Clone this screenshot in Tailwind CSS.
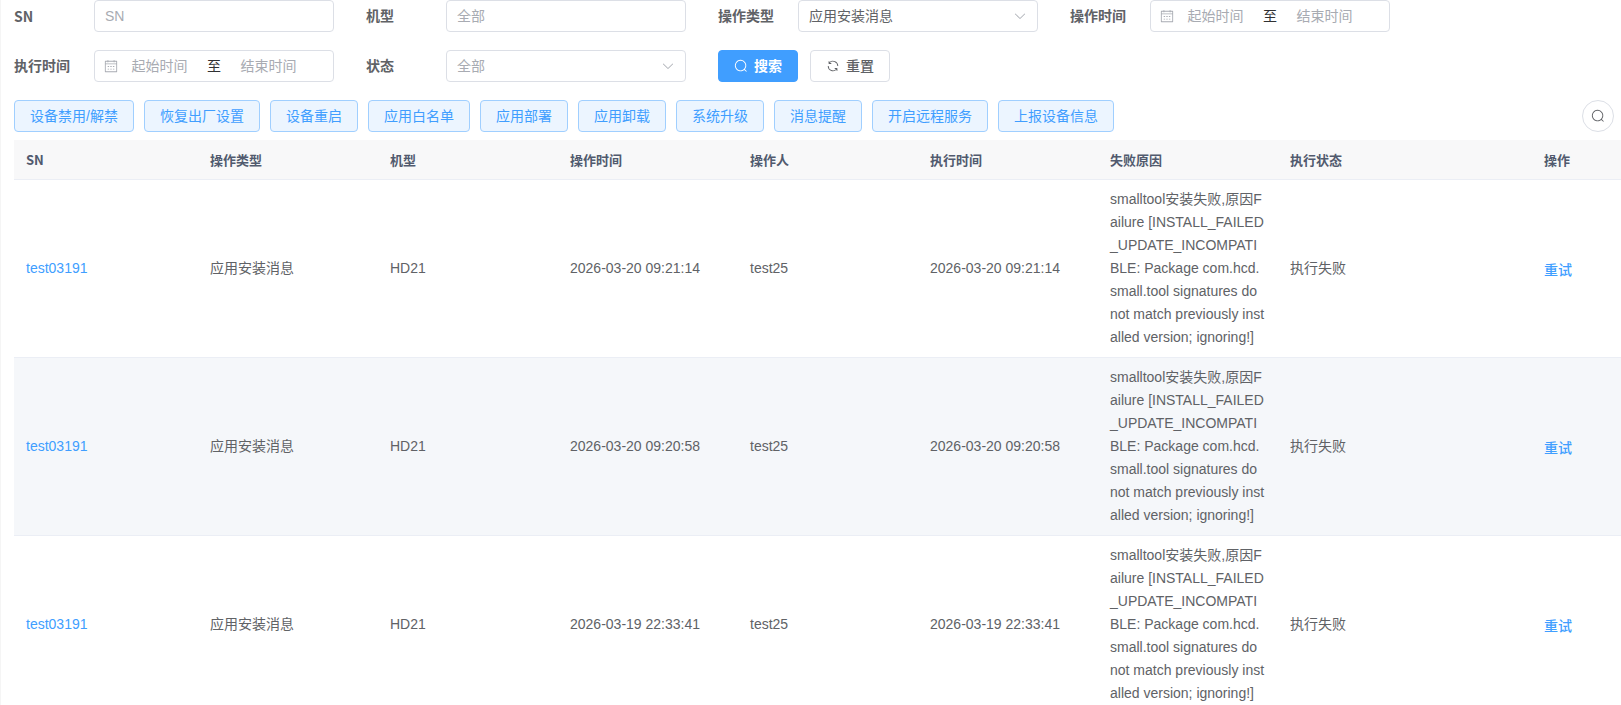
<!DOCTYPE html>
<html lang="zh-CN">
<head>
<meta charset="utf-8">
<meta name="viewport" content="width=device-width, initial-scale=1">
<title>操作记录</title>
<script src="https://cdn.jsdelivr.net/npm/@tailwindcss/browser@4"></script>
</head>
<body class="h-screen overflow-hidden border-l border-[#f5f5f5] bg-white pl-[13px] font-['Liberation_Sans','Noto_Sans_CJK_SC',sans-serif] text-sm text-[#606266]">
<svg class="hidden" aria-hidden="true">
  <symbol id="search" viewBox="0 0 1024 1024"><path fill="currentColor" d="m795.904 750.72 124.992 124.928a32 32 0 0 1-45.248 45.248L750.656 795.904a416 416 0 1 1 45.248-45.184zM480 832a352 352 0 1 0 0-704 352 352 0 0 0 0 704z"/></symbol>
  <symbol id="down" viewBox="0 0 1024 1024"><path fill="currentColor" d="M831.872 340.864 512 652.672 192.128 340.864a30.592 30.592 0 0 0-42.752 0 29.12 29.12 0 0 0 0 41.6L489.664 714.24a32 32 0 0 0 44.672 0l340.288-331.712a29.12 29.12 0 0 0 0-41.728 30.592 30.592 0 0 0-42.752 0z"/></symbol>
  <symbol id="refresh" viewBox="0 0 1024 1024"><path fill="currentColor" d="M771.776 794.88A384 384 0 0 1 128 512h64a320 320 0 0 0 555.712 216.448H654.72a32 32 0 1 1 0-64h149.056a32 32 0 0 1 32 32v148.928a32 32 0 1 1-64 0v-50.56zM276.288 295.616h92.992a32 32 0 0 1 0 64H220.16a32 32 0 0 1-32-32V178.56a32 32 0 0 1 64 0v50.56A384 384 0 0 1 896.128 512h-64a320 320 0 0 0-555.776-216.384z"/></symbol>
  <symbol id="calendar" viewBox="0 0 1024 1024"><path fill="currentColor" d="M128 384v512h768V192H768v32a32 32 0 1 1-64 0v-32H320v32a32 32 0 0 1-64 0v-32H128v128h768v64zm192-256h384V96a32 32 0 1 1 64 0v32h160a32 32 0 0 1 32 32v768a32 32 0 0 1-32 32H96a32 32 0 0 1-32-32V160a32 32 0 0 1 32-32h160V96a32 32 0 0 1 64 0zm-32 384h64a32 32 0 0 1 0 64h-64a32 32 0 0 1 0-64m0 192h64a32 32 0 1 1 0 64h-64a32 32 0 1 1 0-64m192-192h64a32 32 0 0 1 0 64h-64a32 32 0 0 1 0-64m0 192h64a32 32 0 1 1 0 64h-64a32 32 0 1 1 0-64m192-192h64a32 32 0 1 1 0 64h-64a32 32 0 1 1 0-64m0 192h64a32 32 0 1 1 0 64h-64a32 32 0 1 1 0-64"/></symbol>
</svg>

<form class="flex flex-wrap gap-x-8 gap-y-[18px]">
  <div class="flex h-8 items-center">
    <label for="sn" class="w-20 font-['Noto_Sans_CJK_SC',sans-serif] font-bold">SN</label>
    <input id="sn" type="text" placeholder="SN" class="h-8 w-60 rounded border border-[#dcdfe6] px-2.5 placeholder:text-[#a8abb2]">
  </div>
  <div class="flex h-8 items-center">
    <label for="model" class="w-20 font-bold">机型</label>
    <input id="model" type="text" placeholder="全部" class="h-8 w-60 rounded border border-[#dcdfe6] px-2.5 placeholder:text-[#a8abb2]">
  </div>
  <div class="flex h-8 items-center">
    <label for="type" class="w-20 font-bold">操作类型</label>
    <div class="grid w-60 items-center">
      <select id="type" class="col-start-1 row-start-1 h-8 w-full appearance-none rounded border border-[#dcdfe6] bg-white px-2.5"><option>应用安装消息</option></select>
      <svg class="pointer-events-none col-start-1 row-start-1 mr-[11px] size-3.5 justify-self-end text-[#a8abb2]"><use href="#down"/></svg>
    </div>
  </div>
  <div class="flex h-8 items-center">
    <label for="op-start" class="w-20 font-bold">操作时间</label>
    <div class="flex h-8 w-60 items-center rounded border border-[#dcdfe6] px-[9px] text-[#a8abb2]">
      <svg class="size-3.5 shrink-0"><use href="#calendar"/></svg>
      <input id="op-start" type="text" placeholder="起始时间" class="w-[83px] text-center placeholder:text-[#a8abb2]">
      <span class="w-[26px] text-center text-[#303133]">至</span>
      <input type="text" aria-label="操作结束时间" placeholder="结束时间" class="w-[83px] text-center placeholder:text-[#a8abb2]">
    </div>
  </div>
  <div class="flex h-8 items-center">
    <label for="ex-start" class="w-20 font-bold">执行时间</label>
    <div class="flex h-8 w-60 items-center rounded border border-[#dcdfe6] px-[9px] text-[#a8abb2]">
      <svg class="size-3.5 shrink-0"><use href="#calendar"/></svg>
      <input id="ex-start" type="text" placeholder="起始时间" class="w-[83px] text-center placeholder:text-[#a8abb2]">
      <span class="w-[26px] text-center text-[#303133]">至</span>
      <input type="text" aria-label="执行结束时间" placeholder="结束时间" class="w-[83px] text-center placeholder:text-[#a8abb2]">
    </div>
  </div>
  <div class="flex h-8 items-center">
    <label for="status" class="w-20 font-bold">状态</label>
    <div class="grid w-60 items-center">
      <select id="status" class="col-start-1 row-start-1 h-8 w-full appearance-none rounded border border-[#dcdfe6] bg-white px-2.5 text-[#a8abb2]"><option>全部</option></select>
      <svg class="pointer-events-none col-start-1 row-start-1 mr-[11px] size-3.5 justify-self-end text-[#a8abb2]"><use href="#down"/></svg>
    </div>
  </div>
  <div class="flex gap-3">
    <button type="button" class="flex h-8 items-center gap-1.5 rounded border border-[#409eff] bg-[#409eff] px-[15px] font-bold text-white"><svg class="size-3.5"><use href="#search"/></svg>搜索</button>
    <button type="button" class="flex h-8 items-center gap-1.5 rounded border border-[#dcdfe6] bg-white px-[15px] font-medium"><svg class="size-3.5"><use href="#refresh"/></svg>重置</button>
  </div>
</form>

<div class="mt-[18px] flex items-center gap-2.5 pr-[7px]">
  <button type="button" class="h-8 rounded border border-[#a0cfff] bg-[#ecf5ff] px-[15px] text-[#409eff]">设备禁用/解禁</button>
  <button type="button" class="h-8 rounded border border-[#a0cfff] bg-[#ecf5ff] px-[15px] text-[#409eff]">恢复出厂设置</button>
  <button type="button" class="h-8 rounded border border-[#a0cfff] bg-[#ecf5ff] px-[15px] text-[#409eff]">设备重启</button>
  <button type="button" class="h-8 rounded border border-[#a0cfff] bg-[#ecf5ff] px-[15px] text-[#409eff]">应用白名单</button>
  <button type="button" class="h-8 rounded border border-[#a0cfff] bg-[#ecf5ff] px-[15px] text-[#409eff]">应用部署</button>
  <button type="button" class="h-8 rounded border border-[#a0cfff] bg-[#ecf5ff] px-[15px] text-[#409eff]">应用卸载</button>
  <button type="button" class="h-8 rounded border border-[#a0cfff] bg-[#ecf5ff] px-[15px] text-[#409eff]">系统升级</button>
  <button type="button" class="h-8 rounded border border-[#a0cfff] bg-[#ecf5ff] px-[15px] text-[#409eff]">消息提醒</button>
  <button type="button" class="h-8 rounded border border-[#a0cfff] bg-[#ecf5ff] px-[15px] text-[#409eff]">开启远程服务</button>
  <button type="button" class="h-8 rounded border border-[#a0cfff] bg-[#ecf5ff] px-[15px] text-[#409eff]">上报设备信息</button>
  <button type="button" aria-label="显示搜索" class="ml-auto grid size-8 place-items-center rounded-full border border-[#dcdfe6]"><svg class="size-3.5"><use href="#search"/></svg></button>
</div>

<table class="mt-2 w-full table-fixed border-separate border-spacing-0 text-left leading-[23px]">
  <colgroup>
    <col class="w-[184px]"><col class="w-[180px]"><col class="w-[180px]"><col class="w-[180px]"><col class="w-[180px]"><col class="w-[180px]"><col class="w-[180px]"><col class="w-[254px]"><col>
  </colgroup>
  <thead class="bg-[#f8f8f9] font-['Noto_Sans_CJK_SC',sans-serif] text-[13px] text-[#515a6e] [&_th]:h-10 [&_th]:border-b [&_th]:border-[#ebeef5] [&_th]:px-3 [&_th]:font-bold">
    <tr><th>SN</th><th>操作类型</th><th>机型</th><th>操作时间</th><th>操作人</th><th>执行时间</th><th>失败原因</th><th>执行状态</th><th>操作</th></tr>
  </thead>
  <tbody class="[&_td]:border-b [&_td]:border-[#ebeef5] [&_td]:px-3 [&_td]:py-2">
    <tr>
      <td><a href="#" class="text-[#409eff]">test03191</a></td><td>应用安装消息</td><td>HD21</td><td class="whitespace-nowrap">2026-03-20 09:21:14</td><td>test25</td><td class="whitespace-nowrap">2026-03-20 09:21:14</td>
      <td class="break-all">smalltool安装失败,原因Failure [INSTALL_FAILED_UPDATE_INCOMPATIBLE: Package com.hcd.small.tool signatures do not match previously installed version; ignoring!]</td>
      <td>执行失败</td><td><button type="button" class="pt-1 font-medium text-[#409eff]">重试</button></td>
    </tr>
    <tr class="bg-[#f5f7fa]">
      <td><a href="#" class="text-[#409eff]">test03191</a></td><td>应用安装消息</td><td>HD21</td><td class="whitespace-nowrap">2026-03-20 09:20:58</td><td>test25</td><td class="whitespace-nowrap">2026-03-20 09:20:58</td>
      <td class="break-all">smalltool安装失败,原因Failure [INSTALL_FAILED_UPDATE_INCOMPATIBLE: Package com.hcd.small.tool signatures do not match previously installed version; ignoring!]</td>
      <td>执行失败</td><td><button type="button" class="pt-1 font-medium text-[#409eff]">重试</button></td>
    </tr>
    <tr>
      <td><a href="#" class="text-[#409eff]">test03191</a></td><td>应用安装消息</td><td>HD21</td><td class="whitespace-nowrap">2026-03-19 22:33:41</td><td>test25</td><td class="whitespace-nowrap">2026-03-19 22:33:41</td>
      <td class="break-all">smalltool安装失败,原因Failure [INSTALL_FAILED_UPDATE_INCOMPATIBLE: Package com.hcd.small.tool signatures do not match previously installed version; ignoring!]</td>
      <td>执行失败</td><td><button type="button" class="pt-1 font-medium text-[#409eff]">重试</button></td>
    </tr>
  </tbody>
</table>
</body>
</html>
